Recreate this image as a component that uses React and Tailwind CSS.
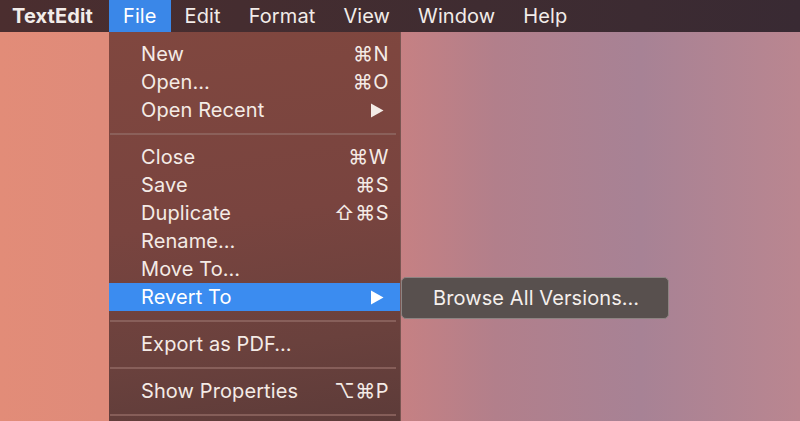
import React from 'react';

const font = { fontFamily: 'Inter, "DejaVu Sans", sans-serif' };

const menuItems = [
  { label: 'New', shortcut: '⌘N' },
  { label: 'Open…', shortcut: '⌘O' },
  { label: 'Open Recent', submenu: true },
  { separator: true },
  { label: 'Close', shortcut: '⌘W' },
  { label: 'Save', shortcut: '⌘S' },
  { label: 'Duplicate', shortcut: '⇧⌘S' },
  { label: 'Rename…' },
  { label: 'Move To…' },
  { label: 'Revert To', submenu: true, active: true },
  { separator: true },
  { label: 'Export as PDF…' },
  { separator: true },
  { label: 'Show Properties', shortcut: '⌥⌘P' },
  { separator: true },
];

function Arrow() {
  return (
    <svg width="14" height="15" viewBox="0 0 14 15" className="mr-[5px]">
      <path d="M1 0.5 L13.5 7.5 L1 14.5 Z" fill="currentColor" />
    </svg>
  );
}

function MenuRow({ item }) {
  if (item.separator) {
    return (
      <div className="h-[19px] flex items-center pl-[1px] pr-[4px]">
        <div className="h-[2px] w-full bg-[#8e6762]/80" />
      </div>
    );
  }
  return (
    <div
      className={`h-[28px] flex items-center justify-between pl-[32px] pr-[11px] ${
        item.active ? 'bg-[#3b8cf0] text-white' : 'text-[#f4ebe6]'
      }`}
    >
      <span>{item.label}</span>
      {item.shortcut && <span className="tracking-[0.5px]">{item.shortcut}</span>}
      {item.submenu && <Arrow />}
    </div>
  );
}

export default function App() {
  const bar = ['File', 'Edit', 'Format', 'View', 'Window', 'Help'];
  return (
    <div
      style={font}
      className="relative w-[800px] h-[421px] overflow-hidden text-[20px] tracking-[0.1px] bg-[linear-gradient(90deg,#e28c78_0%,#dc8a7c_25%,#cb8181_47%,#b27f8b_62%,#a78295_80%,#ba8690_100%)]"
    >
      {/* menu bar */}
      <div className="h-[32px] flex items-stretch bg-[linear-gradient(90deg,#4b2e2f,#3f2c31_60%,#392a33)] text-[#f2ece9]">
        <div className="flex items-center w-[109px] pl-[12px] font-bold">TextEdit</div>
        {bar.map((name) => (
          <div
            key={name}
            className={`flex items-center px-[14px] ${
              name === 'File' ? 'bg-[#3a87e8] text-white' : ''
            }`}
          >
            {name}
          </div>
        ))}
      </div>

      {/* File menu */}
      <div className="absolute left-[109px] top-[32px] w-[292px] pt-[8px] pb-4 border-r border-[#7a5652] bg-[linear-gradient(172deg,#80473f_0%,#79443f_45%,#6a413d_75%,#5a3a38_100%)]">
        {menuItems.map((item, i) => (
          <MenuRow key={i} item={item} />
        ))}
      </div>

      {/* Revert To submenu */}
      <div className="absolute left-[401px] top-[277px] w-[268px] h-[42px] flex items-center pl-[31px] rounded-[5px] border border-[#8d8482] bg-[#58504e] text-[#f4efec]">
        Browse All Versions…
      </div>
    </div>
  );
}
